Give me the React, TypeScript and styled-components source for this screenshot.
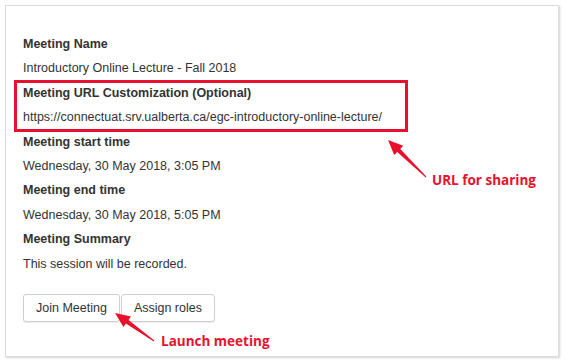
import React from 'react';
import styled, { createGlobalStyle } from 'styled-components';

const RED = '#e8112d';

const GlobalStyle = createGlobalStyle`
  html, body {
    margin: 0;
    padding: 0;
    background: #ffffff;
  }
  body {
    font-family: "Liberation Sans", Arial, Helvetica, sans-serif;
    color: #333333;
  }
`;

const Page = styled.div`
  position: relative;
  width: 565px;
  height: 362px;
  padding: 5px 5px 0 5px;
  box-sizing: border-box;
`;

const Panel = styled.div`
  position: relative;
  width: 554px;
  height: 352px;
  box-sizing: border-box;
  border: 1px solid #dcdcdc;
  box-shadow: 1px 1px 2px rgba(0, 0, 0, 0.18);
  background: #fff;
  padding: 26px 17px 0 17px;
`;

const Field = styled.div`
  position: relative;
`;

const Label = styled.div`
  font-size: 12.5px;
  font-weight: bold;
  line-height: 24.4px;
`;

const Value = styled.div`
  font-size: 12.5px;
  line-height: 24.4px;
`;

const Highlight = styled.div`
  position: absolute;
  left: -9px;
  top: -1px;
  width: 394px;
  height: 52px;
  box-sizing: border-box;
  border: 3px solid ${RED};
  pointer-events: none;
`;

const Actions = styled.div`
  display: flex;
  margin-top: 18px;
`;

const Button = styled.button`
  font-family: inherit;
  font-size: 12.5px;
  color: #333;
  background: #fff;
  border: 1px solid #cfcfcf;
  border-radius: 3px;
  box-shadow: 0 1px 1px rgba(0, 0, 0, 0.08);
  height: 28px;
  padding: 0 12px;
  margin-right: 1px;
  cursor: pointer;
`;

const Note = styled.div<{ $x: number; $y: number }>`
  position: absolute;
  left: ${(p) => p.$x}px;
  top: ${(p) => p.$y}px;
  font-family: "Open Sans", "DejaVu Sans", sans-serif;
  font-weight: bold;
  font-size: 13.5px;
  color: ${RED};
  white-space: nowrap;
`;

const Overlay = styled.svg`
  position: absolute;
  left: 0;
  top: 0;
  pointer-events: none;
`;

type Pt = [number, number];

// skitch-style arrow: tapering shaft with a solid head
function arrowPoints(tail: Pt, tip: Pt, headLen = 15, headW = 13): string {
  const dx = tip[0] - tail[0];
  const dy = tip[1] - tail[1];
  const len = Math.hypot(dx, dy);
  const ux = dx / len;
  const uy = dy / len;
  const nx = -uy;
  const ny = ux;
  const bx = tip[0] - ux * headLen;
  const by = tip[1] - uy * headLen;
  const neckX = tip[0] - ux * (headLen - 4);
  const neckY = tip[1] - uy * (headLen - 4);
  const sw = 2.2;
  const tw = 0.5;
  const pts: Pt[] = [
    [tail[0] + nx * tw, tail[1] + ny * tw],
    [bx + nx * sw, by + ny * sw],
    [neckX + nx * (headW / 2) - ux * 4, neckY + ny * (headW / 2) - uy * 4],
    tip,
    [neckX - nx * (headW / 2) - ux * 4, neckY - ny * (headW / 2) - uy * 4],
    [bx - nx * sw, by - ny * sw],
    [tail[0] - nx * tw, tail[1] - ny * tw],
  ];
  return pts.map((p) => `${p[0].toFixed(1)},${p[1].toFixed(1)}`).join(' ');
}

const fields = [
  { label: 'Meeting Name', value: 'Introductory Online Lecture - Fall 2018' },
  {
    label: 'Meeting URL Customization (Optional)',
    value: 'https://connectuat.srv.ualberta.ca/egc-introductory-online-lecture/',
    highlight: true,
  },
  { label: 'Meeting start time', value: 'Wednesday, 30 May 2018, 3:05 PM' },
  { label: 'Meeting end time', value: 'Wednesday, 30 May 2018, 5:05 PM' },
  { label: 'Meeting Summary', value: 'This session will be recorded.' },
];

export default function App() {
  return (
    <>
      <GlobalStyle />
      <Page>
        <Panel>
          {fields.map((f) => (
            <Field key={f.label}>
              <Label>{f.label}</Label>
              <Value>{f.value}</Value>
              {f.highlight && <Highlight />}
            </Field>
          ))}
          <Actions>
            <Button>Join Meeting</Button>
            <Button>Assign roles</Button>
          </Actions>
        </Panel>
        <Overlay width={565} height={362}>
          <polygon points={arrowPoints([426, 177], [388, 140])} fill={RED} />
          <polygon points={arrowPoints([154, 341], [115, 313])} fill={RED} />
        </Overlay>
        <Note $x={432} $y={171}>URL for sharing</Note>
        <Note $x={161} $y={332}>Launch meeting</Note>
      </Page>
    </>
  );
}
